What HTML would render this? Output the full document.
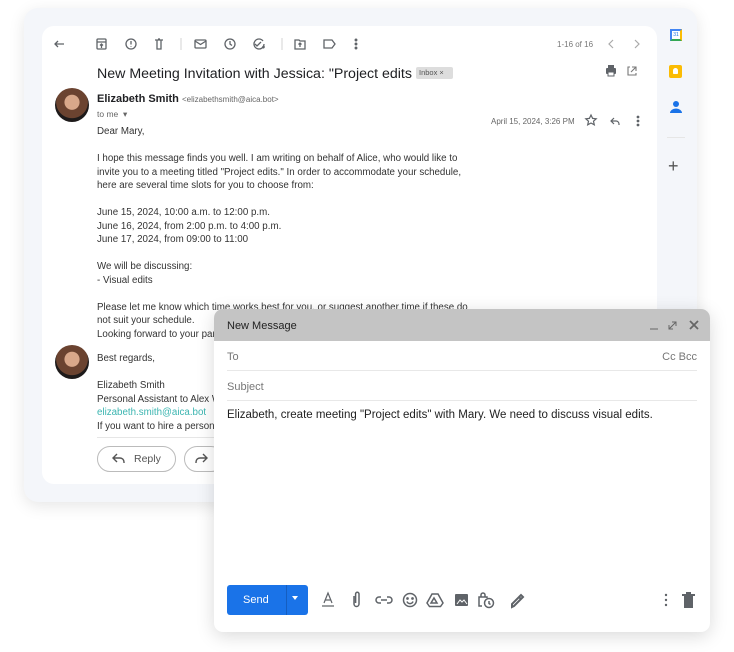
<!DOCTYPE html>
<html><head><meta charset="utf-8"><style>
*{box-sizing:border-box;margin:0;padding:0}
body{width:734px;height:652px;background:#fff;font-family:"Liberation Sans",Arial,sans-serif;position:relative;overflow:hidden;color:#222}
.outer{position:absolute;left:24px;top:8px;width:673px;height:494px;background:#f4f6fa;border-radius:14px;box-shadow:0 4px 16px rgba(0,0,0,.10)}
.card{position:absolute;left:42px;top:26px;width:615px;height:458px;background:#fff;border-radius:12px}
.abs{position:absolute}
.t{position:absolute;font-size:9.75px;color:#333;line-height:13.5px}
.av{position:absolute;width:34px;height:34px;border-radius:50%;background:radial-gradient(circle at 50% 42%,#d9a88a 0 28%,#6b4330 30% 60%,#1d1a1a 62%)}
.compose{position:absolute;left:214px;top:309px;width:496px;height:323px;background:#fff;border-radius:9px;box-shadow:0 4px 18px rgba(0,0,0,.15);overflow:hidden}
.ch{height:32px;background:#c4c4c4;font-size:11px;color:#222;padding:11px 13px}
.row{position:absolute;left:13px;right:13px;border-bottom:1px solid #e8e8e8;font-size:11px;color:#777}
</style></head><body>
<div class="outer"></div>
<div class="card"></div>
<svg class="abs" style="left:52px;top:36px" width="320" height="16" viewBox="0 0 320 16" fill="none" stroke="#5f6368" stroke-width="1.3">
<path d="M12 8H3M6 5L3 8l3 3"/>
<rect x="45" y="3" width="9" height="10" rx="1"/><path d="M45 6h9M49.5 8v4M48 9.5l1.5-1.5 1.5 1.5"/>
<circle cx="79" cy="8" r="5"/><path d="M79 5v3.5M79 10v.6"/>
<path d="M103 4h8M105 4v9h4V4M106 3h2"/>
<path d="M129 2v12" stroke="#ddd"/>
<rect x="143" y="4" width="11" height="8" rx="1"/><path d="M143 5l5.5 3.5L154 5"/>
<circle cx="178" cy="8" r="5"/><path d="M178 5v3l2 1.5"/>
<path d="M211 5a5 5 0 1 0 1 3M203 8l2 2 4-4M210 11h3M211.5 9.5v3"/>
<path d="M230 2v12" stroke="#ddd"/>
<path d="M243 4h4l1 1h5v8h-10z M248 11V7M246.5 8.5L248 7l1.5 1.5"/>
<path d="M272 4h8l3 4-3 4h-8z"/>
<circle cx="304" cy="4" r=".8" fill="#5f6368"/><circle cx="304" cy="8" r=".8" fill="#5f6368"/><circle cx="304" cy="12" r=".8" fill="#5f6368"/>
</svg>
<div class="t" style="left:557px;top:38px;font-size:8px;color:#777">1-16 of 16</div>
<svg class="abs" style="left:606px;top:38px" width="36" height="12" fill="none" stroke="#aaa" stroke-width="1.2"><path d="M7 2L3 6l4 4M29 2l4 4-4 4"/></svg>
<div class="t" style="left:97px;top:65px;font-size:14.2px;color:#202124;line-height:18px;white-space:nowrap">New Meeting Invitation with Jessica: "Project edits</div>
<div class="abs" style="left:416px;top:67px;width:37px;height:12px;background:#ddd;border-radius:2px;font-size:7.5px;color:#555;padding:1px 3px;line-height:10px">Inbox ×</div>
<svg class="abs" style="left:604px;top:64px" width="40" height="14"><rect x="2" y="4" width="10" height="6" rx="1" fill="#5f6368"/><rect x="4" y="1" width="6" height="3" fill="#5f6368"/><rect x="4" y="8" width="6" height="4" fill="#fff" stroke="#5f6368"/><path d="M26 3h-2v8h8V9M28 3h4v4M32 3l-5 5" fill="none" stroke="#777" stroke-width="1.1"/></svg>
<div class="av" style="left:55px;top:88px"></div>
<div class="t" style="left:97px;top:93px;font-size:11px;font-weight:bold;color:#202124">Elizabeth Smith <span style="font-weight:normal;font-size:8px;color:#666">&lt;elizabethsmith@aica.bot&gt;</span></div>
<div class="t" style="left:97px;top:108px;font-size:8.5px;color:#666">to me &nbsp;▾</div>
<div class="t" style="left:491px;top:115px;font-size:8px;color:#666">April 15, 2024, 3:26 PM</div>
<svg class="abs" style="left:584px;top:113px" width="60" height="16" fill="none" stroke="#5f6368" stroke-width="1.2"><path d="M7 2l1.6 3.4 3.6.4-2.7 2.4.8 3.6L7 10l-3.3 1.8.8-3.6L1.8 5.8l3.6-.4z"/><path d="M30 5l-3 3 3 3M27 8h5a3 3 0 0 1 3 3v1"/><circle cx="54" cy="4" r=".8" fill="#5f6368"/><circle cx="54" cy="8" r=".8" fill="#5f6368"/><circle cx="54" cy="12" r=".8" fill="#5f6368"/></svg>
<div class="t" style="left:97px;top:125px">Dear Mary,<br><br>I hope this message finds you well. I am writing on behalf of Alice, who would like to<br>invite you to a meeting titled "Project edits." In order to accommodate your schedule,<br>here are several time slots for you to choose from:<br><br>June 15, 2024, 10:00 a.m. to 12:00 p.m.<br>June 16, 2024, from 2:00 p.m. to 4:00 p.m.<br>June 17, 2024, from 09:00 to 11:00<br><br>We will be discussing:<br>- Visual edits<br><br>Please let me know which time works best for you, or suggest another time if these do<br>not suit your schedule.<br>Looking forward to your participation.</div>
<div class="av" style="left:55px;top:345px"></div>
<div class="t" style="left:97px;top:352px">Best regards,<br><br>Elizabeth Smith<br>Personal Assistant to Alex W<br><span style="color:#3bb5b0">elizabeth.smith@aica.bot</span><br>If you want to hire a personal</div>
<div class="abs" style="left:97px;top:437px;width:120px;height:1px;background:#e6e6e6"></div>
<div class="abs" style="left:97px;top:446px;width:79px;height:26px;border:1px solid #bbb;border-radius:13px;font-size:10.5px;color:#555;padding:6px 0 0 36px">Reply</div>
<svg class="abs" style="left:111px;top:452px" width="16" height="14" fill="none" stroke="#555" stroke-width="1.4"><path d="M6 2L2 6l4 4M2 6h7a4 4 0 0 1 4 4v1"/></svg>
<div class="abs" style="left:184px;top:446px;width:40px;height:26px;border:1px solid #bbb;border-radius:13px"></div>
<svg class="abs" style="left:193px;top:452px" width="16" height="14" fill="none" stroke="#555" stroke-width="1.4"><path d="M10 2l4 4-4 4M14 6H7a4 4 0 0 0-4 4v1"/></svg>
<div class="abs" style="left:670px;top:29px;width:12px;height:12px;background:#fff;border:2px solid #4285f4;border-bottom-color:#34a853;border-right-color:#fbbc04;font-size:5px;color:#1a73e8;text-align:center;line-height:8px">31</div>
<div class="abs" style="left:669px;top:65px;width:13px;height:13px;background:#fbbc04;border-radius:2px"><div style="margin:3px auto;width:5px;height:6px;background:#fff;border-radius:3px 3px 1px 1px"></div></div>
<svg class="abs" style="left:669px;top:100px" width="14" height="14"><circle cx="7" cy="4" r="3" fill="#1a73e8"/><path d="M1 13a6 4.5 0 0 1 12 0z" fill="#1a73e8"/></svg>
<div class="abs" style="left:667px;top:137px;width:18px;height:1px;background:#e6e6e6"></div>
<div class="abs" style="left:668px;top:156px;font-size:18px;color:#555;line-height:20px">+</div>
<div class="compose">
<div class="ch">New Message</div>
<svg class="abs" style="left:434px;top:10px" width="56" height="12" fill="none" stroke="#666" stroke-width="1.4"><path d="M2 10h8M24 3l4 0 0 4M28 3l-7 7M21 6v4h4" stroke-width="1"/><path d="M42 2l8 8M50 2l-8 8" stroke-width="1.8"/></svg>
<div class="row" style="top:32px;height:30px;padding-top:10px">To<span style="float:right">Cc Bcc</span></div>
<div class="row" style="top:62px;height:30px;padding-top:10px">Subject</div>
<div class="abs" style="left:13px;top:100px;font-size:11.5px;color:#222;white-space:nowrap">Elizabeth, create meeting "Project edits" with Mary. We need to discuss visual edits.</div>
<div class="abs" style="left:13px;top:276px;width:81px;height:30px;background:#1a73e8;border-radius:3px;color:#fff;font-size:11px;padding:9px 0 0 16px">Send</div>
<div class="abs" style="left:72px;top:276px;width:1px;height:30px;background:#155ec0"></div>
<div class="abs" style="left:78px;top:287px;border:3px solid transparent;border-top:4px solid #fff"></div>
<svg class="abs" style="left:106px;top:281px" width="270" height="20" fill="none" stroke="#5f6368" stroke-width="1.5">
<path d="M4 13l4-10 4 10M5.5 10h5M2 16h12" stroke-width="1.2"/>
<path d="M34 6v8a2.5 2.5 0 0 0 5 0V4a1.7 1.7 0 0 0-3.4 0v9"/>
<path d="M61 7h-2a3 3 0 0 0 0 6h2M67 7h2a3 3 0 0 1 0 6h-2M61 10h6"/>
<circle cx="90" cy="10" r="6.5"/><circle cx="87.5" cy="8.5" r=".6" fill="#5f6368"/><circle cx="92.5" cy="8.5" r=".6" fill="#5f6368"/><path d="M87 11.5a3.2 3.2 0 0 0 6 0"/>
<path d="M112 4h6l5 9-2.5 3.5h-11L107 13z M114 8l3 5h-6z"/>
<rect x="135" y="4" width="13" height="12" rx="1" fill="#5f6368" stroke="none"/><path d="M137 14l3-4 2 2 2-2 3 4" stroke="#fff" stroke-width="1"/>
<path d="M162 16h-3V7h8v1M161 7V5a2 2 0 0 1 4 0v2" /><circle cx="169" cy="13" r="4.5"/><path d="M169 11v2.5l1.5 1"/>
<path d="M192 17l2-1 7-7-2-2-7 7zM199 7l2-2 2 2-2 2" stroke-width="2"/>
</svg>
<svg class="abs" style="left:446px;top:283px" width="40" height="18"><circle cx="6" cy="3" r="1.2" fill="#5f6368"/><circle cx="6" cy="8" r="1.2" fill="#5f6368"/><circle cx="6" cy="13" r="1.2" fill="#5f6368"/><rect x="24" y="4" width="9" height="12" fill="#5f6368"/><rect x="22" y="2" width="13" height="2" fill="#5f6368"/><rect x="26" y="0" width="5" height="2" fill="#5f6368"/></svg>
</div>
</body></html>
